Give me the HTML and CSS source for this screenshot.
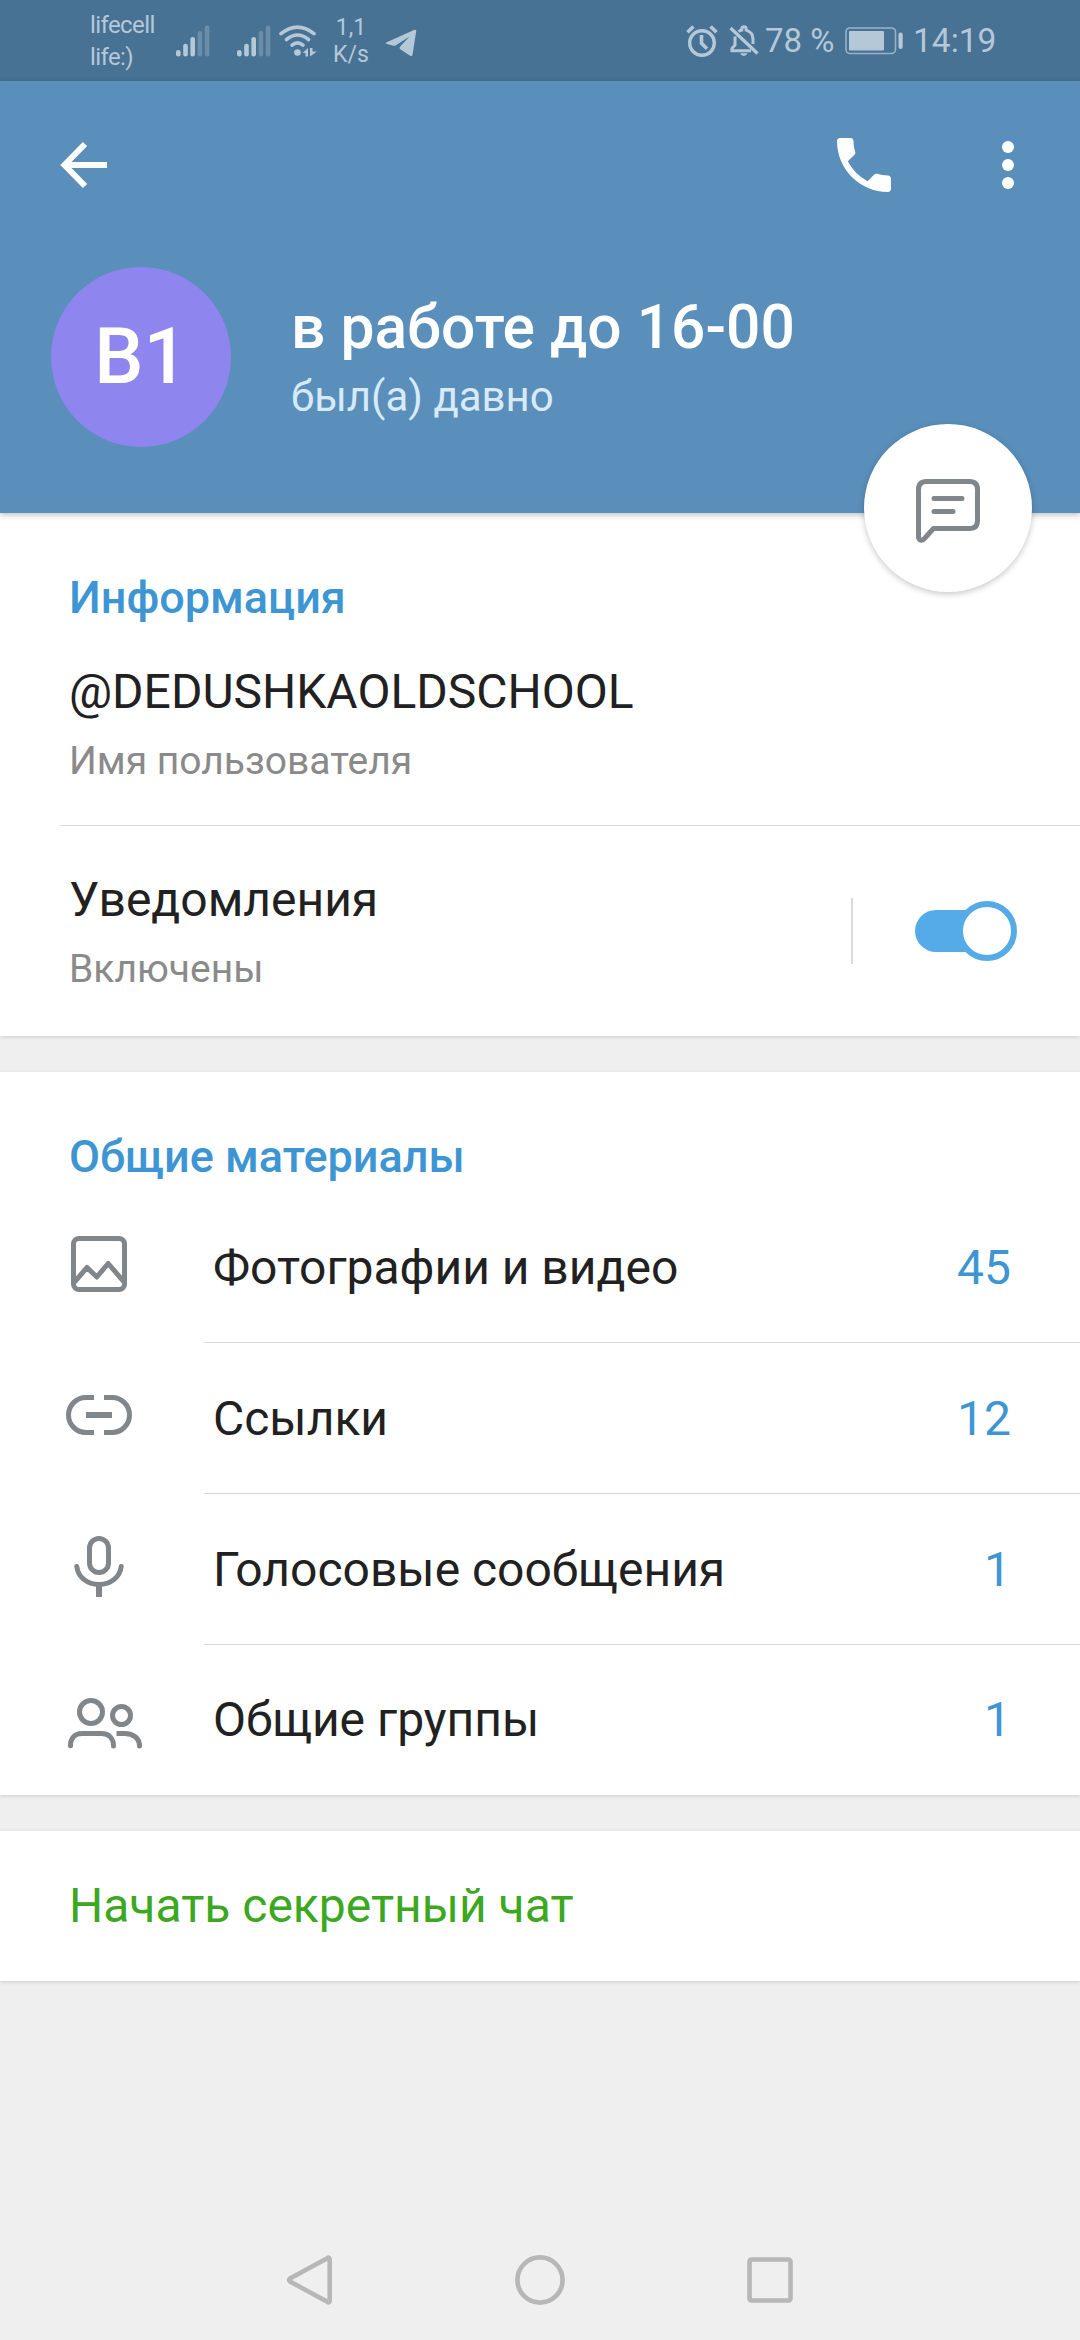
FILE: index.html
```html
<!DOCTYPE html>
<html lang="ru">
<head>
<meta charset="utf-8">
<title>Профиль</title>
<link rel="stylesheet" href="styles.css">
</head>
<body>
<div class="screen">
  <div class="status-bar">
    <div class="carrier">lifecell<br>life:)</div>
    <svg class="signal" width="34" height="32" viewBox="0 0 34 32"><g fill="currentColor"><rect x="0" y="25" width="4.6" height="6.4" rx="2.2"/><rect x="7.2" y="18.7" width="4.6" height="12.7" rx="2.2"/><rect x="14.4" y="12" width="4.6" height="19.4" rx="2.2"/><g opacity=".32"><rect x="21.6" y="6" width="4.6" height="25.4" rx="2.2"/><rect x="28.8" y=".6" width="4.6" height="30.8" rx="2.2"/></g></g></svg>
    <svg class="signal signal-second" width="34" height="32" viewBox="0 0 34 32"><g fill="currentColor"><rect x="0" y="25" width="4.6" height="6.4" rx="2.2"/><rect x="7.2" y="18.7" width="4.6" height="12.7" rx="2.2"/><rect x="14.4" y="12" width="4.6" height="19.4" rx="2.2"/><g opacity=".32"><rect x="21.6" y="6" width="4.6" height="25.4" rx="2.2"/><rect x="28.8" y=".6" width="4.6" height="30.8" rx="2.2"/></g></g></svg>
    <svg class="wifi" width="38" height="32" viewBox="0 0 38 32"><g fill="none" stroke="currentColor" stroke-width="3.6" stroke-linecap="round"><path d="M2 8.7Q18.500-4.500 35 8.700"/><path d="M7.500 14.500Q18.500 5.500 29.500 14.500"/><path d="M13 20.200Q18.500 15.600 24 20.200"/></g><circle cx="18.500" cy="27.500" r="3.300" fill="currentColor"/><path fill="currentColor" d="M23.500 28l5.500-5v8.500h-2.500v-3.500zM31 23h2.500v3.600h4.300l-6.800 5z"/></svg>
    <div class="speed">1,1<br>K/s</div>
    <svg class="plane" width="32" height="28" viewBox="0 0 32 28"><path fill="currentColor" d="M1.200 13.400 29.500.8Q31.500.1 31.200 2.200L27.600 25.500Q27 28 24.700 26.600L15.300 20.200Q13.800 19 15 17.800L24.500 7.500 10.500 16.400Q9 17.200 7.500 16.600L1.200 14.800Q0 14 1.200 13.400Z"/></svg>
    <svg class="alarm" width="32" height="32" viewBox="0 0 32 32"><g fill="none" stroke="currentColor" stroke-width="3.400"><circle cx="16" cy="18" r="12.300"/><path stroke-width="3.600" d="M15.500 10v8.300l5.500 5.400"/><path stroke-width="3.600" d="M1.500 7.300 7.400 1.500M24.600 1.500l5.900 5.800"/></g></svg>
    <svg class="bell" width="30" height="32" viewBox="0 0 30 32"><g fill="none" stroke="currentColor" stroke-width="3"><path d="M6 11.500V20l-3 3.500v2.200H22M9.500 6.600Q11 5.400 12.800 5V4a2.200 2.200 0 0 1 4.400 0v1.200Q24 7.500 24 14v5"/><path stroke-width="3.200" d="M1.500 3 28.500 28.500"/></g><path fill="currentColor" d="M11 28.300h7.500Q17.500 31 14.800 31T11 28.300Z"/></svg>
    <div class="percent">78 %</div>
    <svg class="battery" width="59" height="28" viewBox="0 0 59 28"><rect x="1" y="1" width="49.500" height="25.500" rx="4" fill="none" stroke="currentColor" stroke-opacity=".75" stroke-width="1.600"/><rect x="4" y="4" width="35" height="19.600" rx="1" fill="currentColor"/><rect x="53.500" y="5.500" width="4.200" height="16.500" rx="2.100" fill="currentColor"/></svg>
    <div class="clock">14:19</div>
  </div>

  <header class="header">
    <div class="toolbar">
      <svg width="48" height="48" viewBox="0 0 48 48"><path fill="none" stroke="#fff" stroke-width="6" d="M47 24H5M25 3 4.500 24 25 45"/></svg>
      <div class="actions">
        <svg width="72" height="72" viewBox="0 0 24 24"><path fill="#fff" d="M6.620 10.790c1.440 2.830 3.760 5.140 6.590 6.590l2.200-2.200c.27-.27.67-.36 1.020-.24 1.120.37 2.330.57 3.570.57.55 0 1 .45 1 1V20c0 .55-.45 1-1 1-9.390 0-17-7.610-17-17 0-.55.45-1 1-1h3.500c.55 0 1 .45 1 1 0 1.250.2 2.450.57 3.570.11.35.03.74-.25 1.020l-2.200 2.200z"/></svg>
        <svg width="72" height="72" viewBox="0 0 24 24"><g fill="#fff"><circle cx="12" cy="6" r="2"/><circle cx="12" cy="12" r="2"/><circle cx="12" cy="18" r="2"/></g></svg>
      </div>
    </div>
    <div class="profile">
      <div class="avatar">В1</div>
      <div class="identity">
        <h1 class="name">в работе до 16-00</h1>
        <div class="last-seen">был(а) давно</div>
      </div>
    </div>
    <div class="message-button">
      <svg width="66" height="66" viewBox="0 0 66 66"><g fill="none" stroke="#81868a" stroke-width="5" stroke-linecap="round" stroke-linejoin="round"><path d="M11.500 3.500H54.500Q62.500 3.500 62.500 11.500V42.500Q62.500 50.500 54.500 50.500H18.500L9.500 60.500Q5.500 64.500 3.500 59.500V11.500Q3.500 3.500 11.500 3.500Z"/><path d="M19 20.500H47M19 33.500H38"/></g></svg>
    </div>
  </header>

  <main>
    <section class="section">
      <h2 class="section-title">Информация</h2>
      <div class="info-row">
        <div class="value">@DEDUSHKAOLDSCHOOL</div>
        <div class="hint">Имя пользователя</div>
      </div>
      <div class="notify-row">
        <div class="notify-text">
          <div class="value">Уведомления</div>
          <div class="hint">Включены</div>
        </div>
        <div class="switch-area">
          <div class="switch"><span class="thumb"></span></div>
        </div>
      </div>
    </section>

    <section class="section">
      <h2 class="section-title">Общие материалы</h2>
      <div class="media-row">
        <svg class="media-icon" width="84" height="84" viewBox="0 0 84 84"><rect x="10.500" y="13.500" width="51" height="51" rx="5.500"/><path stroke-linejoin="round" d="M11.500 57 24 42.500 33.800 52 45.200 38.500 61 57"/></svg>
        <div class="media-body"><span>Фотографии и видео</span><span class="count">45</span></div>
      </div>
      <div class="media-row">
        <svg class="media-icon" width="84" height="84" viewBox="0 0 84 84"><path d="M31 21.500H23A17.500 17.500 0 0 0 23 56.500H31M41 21.500H49A17.500 17.500 0 0 1 49 56.500H41"/><path stroke-width="6" d="M23 39H49"/></svg>
        <div class="media-body"><span>Ссылки</span><span class="count">12</span></div>
      </div>
      <div class="media-row">
        <svg class="media-icon" width="84" height="84" viewBox="0 0 84 84"><rect x="26.500" y="11.500" width="19" height="34" rx="9.500"/><path stroke-linecap="round" d="M13.800 39.500C15 50 24 57.500 36 57.500S57 50 58.200 39.500"/><path stroke-width="6" d="M36 57V70"/></svg>
        <div class="media-body"><span>Голосовые сообщения</span><span class="count">1</span></div>
      </div>
      <div class="media-row media-row-last">
        <svg class="media-icon" width="84" height="84" viewBox="0 0 84 84"><circle cx="28" cy="34" r="11.500"/><circle cx="58.500" cy="37.500" r="9"/><path stroke-linecap="round" d="M7.500 67.800C7.500 60 12 55.500 19 55.500H38.500C46 55.500 50.500 60.500 50.500 68"/><path d="M53.500 55.500H62C70 55.500 76.500 60 76.500 68"/><path stroke-linecap="round" d="M76.500 67.800V68"/></svg>
        <div class="media-body"><span>Общие группы</span><span class="count">1</span></div>
      </div>
    </section>

    <section class="section secret">Начать секретный чат</section>
  </main>

  <nav class="nav-bar">
    <svg width="50" height="54" viewBox="0 0 50 54"><path d="M42.300 5.200Q44.700 3.500 44.700 6.500V47.500Q44.700 50.500 42.300 48.800L5 28.500Q3 27 5 25.500Z"/></svg>
    <svg width="54" height="54" viewBox="0 0 54 54"><circle cx="27" cy="27" r="22.600"/></svg>
    <svg width="50" height="54" viewBox="0 0 50 54"><rect x="4.500" y="6.500" width="41" height="41" rx="2"/></svg>
  </nav>
</div>
</body>
</html>
```

FILE: styles.css
```css
* {
  box-sizing: border-box;
}

body {
  margin: 0;
  background: #efefef;
  font-family: Roboto, "Liberation Sans", sans-serif;
  color: #212121;
}

svg {
  display: block;
  flex: none;
}

.screen {
  display: flex;
  flex-direction: column;
  width: 1080px;
  height: 2340px;
  background: #efefef;
  overflow: hidden;
}

/* Status bar */

.status-bar {
  display: flex;
  align-items: center;
  flex: none;
  height: 81px;
  padding-left: 90px;
  background: #477294;
  color: #b5c8d8;
  white-space: nowrap;
}

.carrier {
  width: 86px;
  font-size: 24px;
  letter-spacing: -0.6px;
  line-height: 32px;
}

.signal-second {
  margin-left: 27px;
}

.wifi {
  margin-left: 8px;
}

.speed {
  width: 52px;
  margin-left: 8px;
  padding-top: 1px;
  font-size: 23px;
  line-height: 27px;
  text-align: center;
}

.plane {
  margin: 4px 0 0 8px;
}

.alarm {
  margin-left: 269px;
}

.bell {
  margin-left: 11px;
}

.percent {
  width: 80px;
  margin-left: 6px;
  font-size: 33px;
}

.clock {
  margin-left: 9px;
  font-size: 33.5px;
}

/* Profile header */

.header {
  position: relative;
  z-index: 1;
  flex: none;
  height: 432px;
  background: #5a8fbb;
  box-shadow: 0 2px 6px rgba(0, 0, 0, .25);
}

.toolbar {
  display: flex;
  align-items: center;
  justify-content: space-between;
  height: 168px;
  padding: 0 36px 0 60px;
}

.actions {
  display: flex;
  gap: 72px;
}

.profile {
  display: flex;
  align-items: center;
  gap: 60px;
  padding: 18px 0 0 51px;
}

.avatar {
  display: flex;
  align-items: center;
  justify-content: center;
  width: 180px;
  height: 180px;
  border-radius: 50%;
  background: #8e85ee;
  color: #fff;
  font-size: 78px;
  font-weight: 500;
  line-height: 90px;
}

.identity {
  padding-top: 8px;
}

.name {
  margin: 0;
  color: #fff;
  font-size: 60.5px;
  font-weight: 500;
  line-height: 72px;
}

.last-seen {
  color: #d7eafa;
  font-size: 42px;
  line-height: 66px;
}

.message-button {
  position: absolute;
  right: 48px;
  bottom: -79px;
  display: flex;
  align-items: center;
  justify-content: center;
  width: 168px;
  height: 168px;
  padding-top: 5px;
  border-radius: 50%;
  background: #fff;
  box-shadow: 0 2px 6px rgba(0, 0, 0, .22);
}

/* Sections */

.section {
  margin-bottom: 36px;
  background: #fff;
  box-shadow: 0 1px 4px rgba(0, 0, 0, .14);
}

.section-title {
  margin: 0;
  padding: 58px 69px 8px;
  color: #3d95d4;
  font-size: 45px;
  font-weight: 500;
  line-height: 54px;
}

.value {
  font-size: 48px;
  line-height: 60px;
}

.hint {
  margin-top: 15px;
  color: #8a8a8a;
  font-size: 39px;
  line-height: 48px;
}

.info-row {
  height: 193px;
  margin-left: 60px;
  padding: 29px 0 0 9px;
  border-bottom: 1px solid #d9d9d9;
}

.notify-row {
  display: flex;
  align-items: center;
  justify-content: space-between;
  height: 210px;
  padding: 0 63px 0 69px;
}

.switch-area {
  display: flex;
  align-items: center;
  height: 66px;
  padding-left: 62px;
  border-left: 2px solid #d9d9d9;
}

.switch {
  display: flex;
  align-items: center;
  justify-content: flex-end;
  width: 102px;
  height: 42px;
  border-radius: 21px;
  background: linear-gradient(to right, #54abe8 72px, transparent 72px);
}

.thumb {
  flex: none;
  width: 60px;
  height: 60px;
  border: 6px solid #54abe8;
  border-radius: 50%;
  background: #fff;
}

.media-row {
  display: flex;
  align-items: center;
  height: 151px;
  padding-left: 63px;
}

.media-row-last {
  height: 150px;
}

.media-icon {
  margin-bottom: 1px;
  fill: none;
  stroke: #81868a;
  stroke-width: 5;
}

.media-row-last .media-icon {
  margin-bottom: 0;
}

.media-body {
  display: flex;
  align-items: center;
  justify-content: space-between;
  flex: 1;
  height: 100%;
  margin-left: 57px;
  padding: 0 69px 0 9px;
  border-bottom: 1px solid #d9d9d9;
  font-size: 48px;
}

.media-row-last .media-body {
  padding-bottom: 2px;
  border-bottom: 0;
}

.count {
  color: #3d95d4;
}

.secret {
  height: 150px;
  padding-left: 69px;
  color: #3ca821;
  font-size: 48px;
  line-height: 150px;
}

/* System navigation */

.nav-bar {
  display: flex;
  justify-content: space-between;
  width: 510px;
  margin: auto auto 33px;
  fill: none;
  stroke: #b7b7b7;
  stroke-width: 4.6;
}
```
